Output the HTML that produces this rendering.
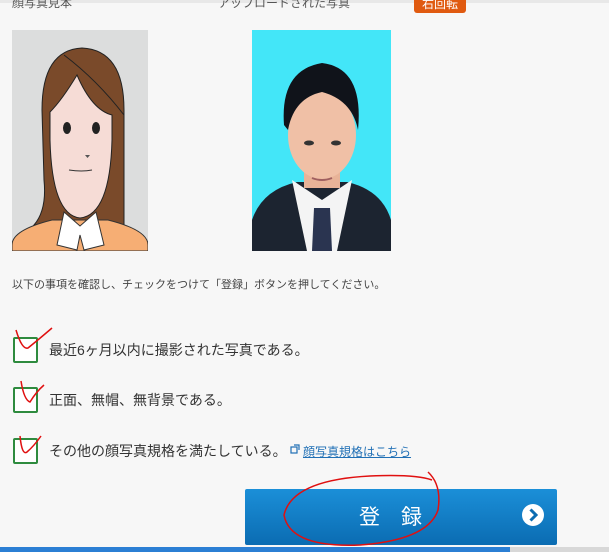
<!DOCTYPE html>
<html><head><meta charset="utf-8"><style>
body{margin:0;width:609px;height:552px;overflow:hidden;background:#f7f7f7;font-family:"Liberation Sans","Noto Sans CJK JP",sans-serif;position:relative;color:#333}
.a{position:absolute}
.cb{position:absolute;left:13px;width:21px;height:22px;border:2px solid #2e8b3e;border-radius:2px;background:#fff}
.t{position:absolute;left:49px;font-size:14px;color:#333;line-height:16px}
</style></head><body>
<div class="a" style="left:0;top:0;width:609px;height:3px;background:#e8e8e8"></div>
<div class="a" style="left:12px;top:-6px;font-size:12px;color:#555">顔写真見本</div>
<div class="a" style="left:218px;top:-6px;font-size:12px;color:#555">アップロードされた写真</div>
<div class="a" style="left:414px;top:-4px;width:52px;height:17px;background:#e05a10;border-radius:3px;color:#fff;font-size:12px;text-align:center;line-height:17px">右回転</div>

<svg class="a" style="left:12px;top:30px" width="136" height="221" viewBox="0 0 136 221">
<rect width="136" height="221" fill="#dcdddd"/>
<path d="M30 80 Q30 20 70 18 Q112 20 112 80 L112 195 L85 190 L50 190 L22 195 Q35 180 32 150Z" fill="#7a4a2a" stroke="#222" stroke-width="1"/>
<path d="M0 215 Q0 200 40 190 L96 190 Q136 200 136 215 L136 221 L0 221Z" fill="#f6ae74" stroke="#333"/>
<path d="M38 110 Q40 185 68 188 Q98 185 100 110 L100 85 Q80 80 65 45 Q50 70 38 82Z" fill="#f6dcd6" stroke="#222"/>
<path d="M52 182 L45 215 L65 220 L68 205 L72 220 L92 215 L84 182 L68 196Z" fill="#fff" stroke="#333"/>
<ellipse cx="55" cy="98" rx="4" ry="6" fill="#222"/><ellipse cx="84" cy="98" rx="4" ry="6" fill="#222"/>
<path d="M57 140 Q70 142 80 140" stroke="#333" fill="none"/><path d="M73 125 l5 0 l-2.5 3z" fill="#555"/>
<path d="M52 25 Q85 50 112 85" stroke="#222" fill="none"/>
</svg>

<svg class="a" style="left:252px;top:30px" width="139" height="221" viewBox="0 0 139 221">
<rect width="139" height="221" fill="#43e6f8"/>
<path d="M0 190 Q10 160 45 152 L95 152 Q130 160 139 190 L139 221 L0 221Z" fill="#1c2430"/>
<path d="M40 150 L55 221 L85 221 L100 150 L70 170Z" fill="#f4f4f4"/>
<path d="M62 178 L78 178 L80 221 L60 221Z" fill="#2a3450"/>
<rect x="52" y="118" width="36" height="40" fill="#e8b398"/>
<ellipse cx="70" cy="105" rx="34" ry="44" fill="#f0c0a6"/>
<path d="M32 95 Q28 40 70 33 Q112 38 106 100 Q100 70 70 62 Q42 68 36 100Z" fill="#10131a"/>
<ellipse cx="57" cy="113" rx="5" ry="2.5" fill="#333"/><ellipse cx="84" cy="113" rx="5" ry="2.5" fill="#333"/>
<path d="M60 148 Q70 152 80 148" stroke="#a06060" stroke-width="2" fill="none"/>
</svg>

<div class="a" style="left:12px;top:276px;font-size:11px;color:#444">以下の事項を確認し、チェックをつけて「登録」ボタンを押してください。</div>

<div class="cb" style="top:337px"></div><div class="t" style="top:342px">最近6ヶ月以内に撮影された写真である。</div>
<div class="cb" style="top:387px"></div><div class="t" style="top:392px">正面、無帽、無背景である。</div>
<div class="cb" style="top:438px"></div><div class="t" style="top:443px">その他の顔写真規格を満たしている。</div>
<svg class="a" style="left:290px;top:444px" width="10" height="10" fill="none" stroke="#1f6fb5" stroke-width="1.2"><rect x="1" y="3" width="6" height="6"/><path d="M4 1 H9 V6"/></svg>
<div class="a" style="left:303px;top:443px;font-size:12px;color:#1f6fb5;text-decoration:underline">顔写真規格はこちら</div>

<div class="a" style="left:245px;top:489px;width:312px;height:56px;background:linear-gradient(#1b8fd8,#0b6cb2);border-radius:2px"></div>
<div class="a" style="left:359px;top:501px;font-size:21px;color:#fff;letter-spacing:21px">登録</div>
<svg class="a" style="left:521px;top:503px" width="24" height="24"><circle cx="12" cy="12" r="11" fill="#fff"/><path d="M9.5 6.5 L15 12 L9.5 17.5" stroke="#0b6cb2" stroke-width="3" fill="none"/></svg>

<div class="a" style="left:0;top:547px;width:609px;height:5px;background:#d8d8d8"></div>
<div class="a" style="left:0;top:547px;width:510px;height:5px;background:#2b7fd4"></div>

<svg class="a" style="left:0;top:0" width="609" height="552" fill="none" stroke="#e01010" stroke-width="1.5">
<path d="M16 330 Q22 350 28 348 Q38 340 52 328"/>
<path d="M21 381 Q24 400 30 402 Q36 392 44 385"/>
<path d="M20 436 Q22 456 27 452 Q34 446 41 436"/>
<path d="M428 472 Q442 485 438 510 Q428 540 360 545 Q290 548 284 515 Q292 480 370 476 Q415 474 432 480"/>
</svg>
</body></html>
